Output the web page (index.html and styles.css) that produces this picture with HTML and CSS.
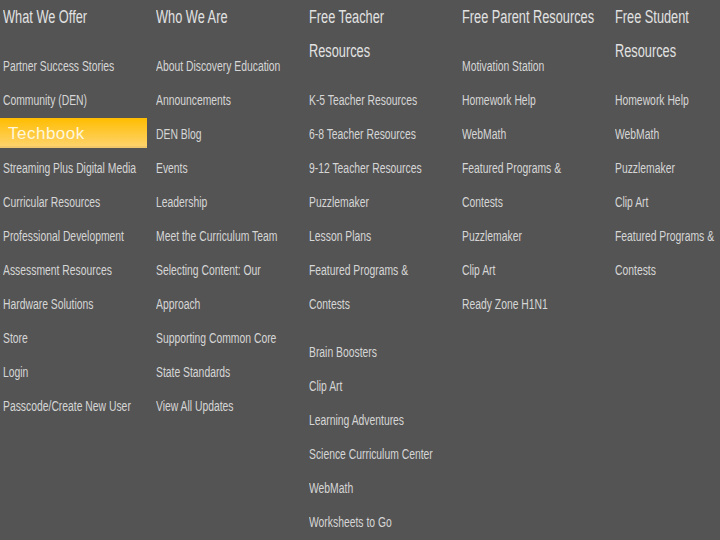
FILE: index.html
```html
<!DOCTYPE html>
<html>
<head>
<meta charset="utf-8">
<link rel="stylesheet" href="styles.css">
</head>
<body>
<div class="menu">
  <div class="col">
    <div class="head">What We Offer</div>
    <ul class="items">
      <li>Partner Success Stories</li>
      <li>Community (DEN)</li>
      <li class="hl"><span>Techbook</span></li>
      <li>Streaming Plus Digital Media</li>
      <li>Curricular Resources</li>
      <li>Professional Development</li>
      <li>Assessment Resources</li>
      <li>Hardware Solutions</li>
      <li>Store</li>
      <li>Login</li>
      <li>Passcode/Create New User</li>
    </ul>
  </div>
  <div class="col">
    <div class="head">Who We Are</div>
    <ul class="items">
      <li>About Discovery Education</li>
      <li>Announcements</li>
      <li>DEN Blog</li>
      <li>Events</li>
      <li>Leadership</li>
      <li>Meet the Curriculum Team</li>
      <li>Selecting Content: Our</li>
      <li>Approach</li>
      <li>Supporting Common Core</li>
      <li>State Standards</li>
      <li>View All Updates</li>
    </ul>
  </div>
  <div class="col">
    <div class="head">Free Teacher<br>Resources</div>
    <ul class="items">
      <li>K-5 Teacher Resources</li>
      <li>6-8 Teacher Resources</li>
      <li>9-12 Teacher Resources</li>
      <li>Puzzlemaker</li>
      <li>Lesson Plans</li>
      <li>Featured Programs &amp;</li>
      <li>Contests</li>
    </ul>
    <ul class="items group">
      <li>Brain Boosters</li>
      <li>Clip Art</li>
      <li>Learning Adventures</li>
      <li>Science Curriculum Center</li>
      <li>WebMath</li>
      <li>Worksheets to Go</li>
    </ul>
  </div>
  <div class="col">
    <div class="head">Free Parent Resources</div>
    <ul class="items">
      <li>Motivation Station</li>
      <li>Homework Help</li>
      <li>WebMath</li>
      <li>Featured Programs &amp;</li>
      <li>Contests</li>
      <li>Puzzlemaker</li>
      <li>Clip Art</li>
      <li>Ready Zone H1N1</li>
    </ul>
  </div>
  <div class="col">
    <div class="head">Free Student<br>Resources</div>
    <ul class="items">
      <li>Homework Help</li>
      <li>WebMath</li>
      <li>Puzzlemaker</li>
      <li>Clip Art</li>
      <li>Featured Programs &amp;</li>
      <li>Contests</li>
    </ul>
  </div>
</div>
</body>
</html>
```
FILE: styles.css
```css
html, body {
  margin: 0;
  padding: 0;
  background: #545454;
  height: 100%;
  overflow: hidden;
}
.menu {
  display: grid;
  grid-template-columns: repeat(4, 153px) 1fr;
  padding-left: 3px;
  font-family: "Liberation Sans", Arial, sans-serif;
}
.col {
  display: flex;
  flex-direction: column;
  min-width: 0;
}
.head {
  font-size: 18px;
  line-height: 34px;
  color: #e2e2e2;
  white-space: nowrap;
  margin-bottom: 15px;
  transform: scaleX(0.71);
  transform-origin: left center;
}
.items {
  list-style: none;
  margin: 0;
  padding: 0;
}
.items li {
  font-size: 14px;
  line-height: 34px;
  height: 34px;
  color: #d6d6d6;
  white-space: nowrap;
  transform: scaleX(0.74);
  transform-origin: left center;
}
.group {
  margin-top: 14px;
}
.items li.hl {
  transform: none;
  margin-left: -3px;
  padding: 1px 0 3px;
  box-sizing: border-box;
}
.hl span {
  display: block;
  width: 139px;
  height: 28px;
  line-height: 31px;
  padding-left: 8px;
  font-size: 17px;
  letter-spacing: 0.5px;
  color: #fff6dc;
  background: linear-gradient(#ffbd00, #ffd36a);
  border-bottom: 2px solid #f1c76a;
}
```
